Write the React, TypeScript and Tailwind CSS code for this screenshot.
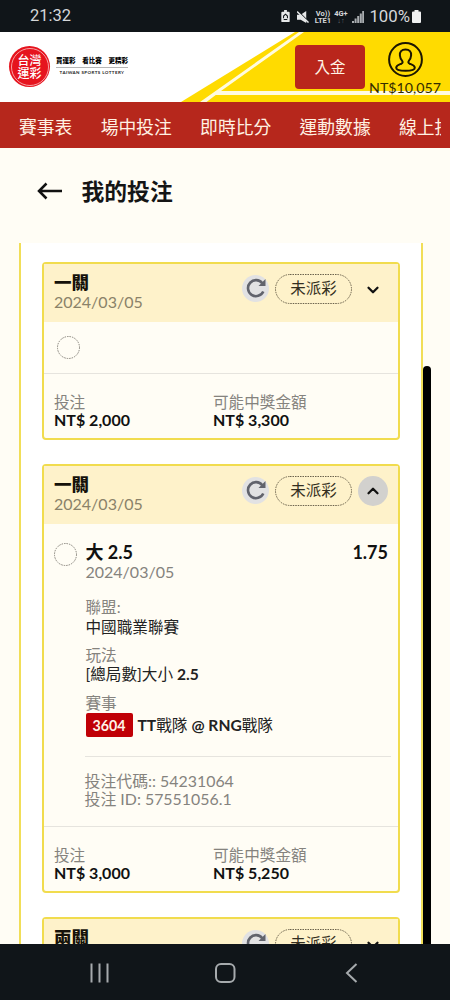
import { ChevronDown, ChevronUp } from "lucide-react";

const NAV_ITEMS = ["賽事表", "場中投注", "即時比分", "運動數據", "線上投注"];

interface Bet {
  title: string;
  stake: string;
  payout: string;
  open?: boolean;
}

const BETS: Bet[] = [
  { title: "一關", stake: "NT$ 2,000", payout: "NT$ 3,300" },
  { title: "一關", stake: "NT$ 3,000", payout: "NT$ 5,250", open: true },
  { title: "兩關", stake: "NT$ 1,000", payout: "NT$ 2,100" },
];

function StatusBar() {
  return (
    <div className="flex h-8 shrink-0 items-center bg-[#101519] pl-[30px] pr-[29px] pt-px font-['Roboto',sans-serif] text-[#d5d7d9]">
      <span className="text-[16.5px] leading-none">21:32</span>
      <svg className="ml-auto h-[13px] w-[9px]" viewBox="0 0 9 14">
        <path d="M3 0h3v2h2q1 0 1 1v9q0 1-1 1H1q-1 0-1-1V3q0-1 1-1h2z" fill="#e6e8e9" />
        <path d="M2.4 9V6.500l2.1-2 2.1 2V9M2.6 10.300h3.800" fill="none" stroke="#101519" strokeWidth="1.1" />
      </svg>
      <svg className="ml-[7px] h-[12px] w-[12px]" viewBox="0 0 13 13">
        <path d="M0 4h4l6-4v13L4 9.500H0z" fill="#e6e8e9" />
        <path d="M0 -1l13 13" stroke="#101519" strokeWidth="1.200" />
        <path d="M0 0.500l12.500 12" stroke="#e6e8e9" strokeWidth="1.600" />
      </svg>
      <div className="ml-[5px] w-[17px] text-center text-[7.5px] font-bold leading-[7px]">
        <div>Vo))</div>
        <div>LTE1</div>
      </div>
      <div className="ml-[2px] w-[15px] text-center text-[7.5px] font-bold leading-[7px]">
        <div>4G+</div>
        <div className="text-[#646a6e]">↓↑</div>
      </div>
      <svg className="ml-[4px] h-[12px] w-[12px]" viewBox="0 0 12 12">
        <path d="M0 12V10h2v2zM2.6 12V7.500h2V12zM5.200 12V5h2v7zM7.800 12V2.500h2V12z" fill="#a9adb0" />
        <path d="M10.200 12V0H12v12z" fill="#a9adb0" />
      </svg>
      <span className="ml-[5px] text-[16.800px] leading-none">100%</span>
      <svg className="ml-[2px] h-[13px] w-[9px]" viewBox="0 0 9 13">
        <path d="M2.500 0h4v1.500H8q1 0 1 1V12q0 1-1 1H1q-1 0-1-1V2.500q0-1 1-1h1.500z" fill="#f0f1f2" />
      </svg>
    </div>
  );
}

function Logo() {
  return (
    <div className="flex items-center">
      <div className="flex size-[41px] items-center justify-center rounded-full bg-[#e6141e]">
        <div className="flex size-[38px] items-center justify-center rounded-full border border-[#f8a0a3]">
          <div className="w-[24px] text-[12px] font-medium leading-[13px] text-white">台灣運彩</div>
        </div>
      </div>
      <div className="ml-[6px] w-[72px]">
        <div className="flex h-[9px] justify-between text-[6.500px] font-black leading-[8px] text-black">
          <span>買運彩</span>
          <span>看比賽</span>
          <span>更精彩</span>
        </div>
        <div className="mt-[1px] border-t border-[#b5b5b5] pt-[2px] text-center text-[4.500px] font-bold leading-[6px] tracking-[0.400px] text-[#222]">
          TAIWAN SPORTS LOTTERY
        </div>
      </div>
    </div>
  );
}

function Header() {
  return (
    <header className="relative flex h-[70px] shrink-0 items-start bg-white pl-[9px]">
      <svg className="absolute right-0 top-0 h-[70px] w-[270px]" viewBox="180 32 270 70">
        <path d="M181 102L295 32H450V102z" fill="#ffdb00" />
        <path d="M206.500 102L221 91L304 32h-5L217 90L200 102z" fill="#fffbe0" />
        <path d="M219 91H450v4H213z" fill="#fffbe0" />
      </svg>
      <div className="mt-[14px]">
        <Logo />
      </div>
      <button className="relative ml-auto mt-[13px] h-[44px] w-[70px] rounded bg-[#b9261c] pt-[2px] text-[15.500px] text-[#fff4e6]">
        入金
      </button>
      <div className="relative ml-[4px] mr-[9px] flex w-[72px] flex-col items-center pt-[10px]">
        <svg className="size-[35px]" viewBox="0 0 35 35" fill="none" stroke="#1c1600">
          <circle cx="17.500" cy="17.500" r="16.400" strokeWidth="2" />
          <path
            d="M17.500 7.500c-4 0-6 2.500-5.600 6 .2 2.500 1 4 2.300 5.400.8 1.300.5 2.200-.8 2.800-2.500 1-5.200 1.500-5.200 4 0 2 3.700 3 9.300 3s9.300-1 9.300-3c0-2.500-2.700-3-5.200-4-1.300-.6-1.600-1.500-.8-2.800 1.300-1.400 2.100-2.900 2.300-5.400.4-3.500-1.600-6-5.600-6z"
            strokeWidth="2"
          />
        </svg>
        <span className="whitespace-nowrap text-[14.200px] leading-[22px] text-[#352d00]">NT$10,057</span>
      </div>
    </header>
  );
}

function StatusPill() {
  return (
    <div className="relative flex h-[30px] w-[77px] items-center justify-center text-[15.500px] leading-none text-[#332e20]">
      <svg className="absolute inset-0 h-[30px] w-[77px]" viewBox="0 0 77 30" fill="none">
        <rect x="0.500" y="0.500" width="76" height="29" rx="14.500" stroke="#6b624c" strokeDasharray="1.500 1" />
      </svg>
      未派彩
    </div>
  );
}

function TicketCircle() {
  return (
    <svg className="size-[23px] shrink-0" viewBox="0 0 23 23" fill="none">
      <circle cx="11.500" cy="11.500" r="11" stroke="#85827a" strokeDasharray="1.500 1" />
    </svg>
  );
}

function RefreshButton() {
  return (
    <button className="flex size-[27px] items-center justify-center rounded-full bg-[#e2e2e3]">
      <svg className="size-[20px]" viewBox="0 0 20 20">
        <path d="M16.300 5.200A8 8 0 1 0 17.300 13.500" fill="none" stroke="#61636c" strokeWidth="2.600" />
        <path d="M19.500 1V8H12.500z" fill="#61636c" />
      </svg>
    </button>
  );
}

function BetDetail() {
  return (
    <div className="flex h-[302px] pl-[10px] pr-[7px] pt-[19px]">
      <TicketCircle />
      <div className="ml-[8.500px] flex-1 text-[15.600px] leading-[18px]">
        <div className="flex justify-between pr-[3px] text-[18px] font-bold leading-[18px] text-[#111]">
          <span>大 2.5</span>
          <span>1.75</span>
        </div>
        <div className="mt-[2px] text-[16px] text-[#85837e]">2024/03/05</div>
        <div className="mt-[17px] text-[#85837e]">聯盟:</div>
        <div className="mt-[2px] text-[#222]">中國職業聯賽</div>
        <div className="mt-[10px] text-[#85837e]">玩法</div>
        <div className="mt-[1px] text-[#222]">
          [總局數]大小 <b>2.5</b>
        </div>
        <div className="mt-[11px] text-[#85837e]">賽事</div>
        <div className="mt-[1px] flex h-[24px] items-center text-[#222]">
          <span className="mr-[5px] h-[24px] w-[47px] rounded-[2px] bg-[#c00006] text-center text-[14.200px] font-bold leading-[25px] text-[#fff3e8]">
            3604
          </span>
          <span>
            <b>TT</b>戰隊 <b>@ RNG</b>戰隊
          </span>
        </div>
        <div className="-ml-px mt-[19px] border-t border-[#e6e4de] pt-[15px] text-[15.900px] text-[#85837e]">
          <div className="leading-[17.500px]">投注代碼:: 54231064</div>
          <div className="leading-[17.500px]">投注 ID: 57551056.1</div>
        </div>
      </div>
    </div>
  );
}

function BetCard({ bet }: { bet: Bet }) {
  return (
    <section className="rounded border-2 border-[#f1dc4e] bg-[#fffdf5]">
      <div className="flex h-[58px] bg-[#fef2ca] pl-[10px] pr-[10px] pt-[10px]">
        <div className="flex-1">
          <div className="text-[17.500px] font-black leading-[18px] text-[#15120a]">{bet.title}</div>
          <div className="text-[16px] leading-[19px] text-[#8a8269]">2024/03/05</div>
        </div>
        <div className="flex h-[30px] items-center">
          <div className="-mt-[2px]">
            <RefreshButton />
          </div>
          <div className="ml-[6px]">
            <StatusPill />
          </div>
          <button
            className={`ml-[6px] flex size-[30px] items-center justify-center rounded-full ${bet.open ? "bg-[#d2d1ce]" : "pt-[2px]"}`}
          >
            {bet.open ? (
              <ChevronUp className="size-[18px] text-[#111]" strokeWidth={3} />
            ) : (
              <ChevronDown className="size-[18px] text-[#111]" strokeWidth={3} />
            )}
          </button>
        </div>
      </div>
      {bet.open ? (
        <BetDetail />
      ) : (
        <div className="flex h-[51px] items-center pl-[13px]">
          <TicketCircle />
        </div>
      )}
      <div className="grid h-[65px] grid-cols-[159px_1fr] border-t border-[#e6e4de] pl-[10px] pt-[19px] leading-[18px]">
        <div>
          <div className="text-[15.600px] text-[#85837e]">投注</div>
          <div className="text-[16px] font-bold text-[#111]">{bet.stake}</div>
        </div>
        <div>
          <div className="text-[15.600px] text-[#85837e]">可能中獎金額</div>
          <div className="text-[16px] font-bold text-[#111]">{bet.payout}</div>
        </div>
      </div>
    </section>
  );
}

export default function App() {
  return (
    <div className="flex h-[1000px] w-[450px] flex-col overflow-hidden bg-[#fffdf5] font-['Lato','Noto_Sans_CJK_TC',sans-serif]">
      <StatusBar />
      <Header />
      <nav className="h-[46px] shrink-0 bg-[#b6271c] pl-[19px] pr-[9px]">
        <div className="flex gap-[28.300px] overflow-hidden whitespace-nowrap text-[17.800px] leading-[50px] text-[#fff1e3]">
          {NAV_ITEMS.map(item => (
            <span key={item} className="shrink-0">{item}</span>
          ))}
        </div>
      </nav>
      <div className="flex h-[95px] shrink-0 items-center pb-[9px] pl-[37px]">
        <svg className="h-[18px] w-[26px]" viewBox="0 0 26 18" fill="none" stroke="#111" strokeWidth="2.500">
          <path d="M25 9H2M9.500 1.500L2 9l7.500 7.500" />
        </svg>
        <h1 className="ml-[18.500px] text-[22.800px] font-bold leading-none text-[#151515]">我的投注</h1>
      </div>
      <main className="relative min-h-0 flex-1 overflow-hidden pl-[19px] pr-[27px]">
        <div className="flex flex-col gap-[24px] border-x-2 border-[#f1de58] bg-white pl-[21px] pr-[21px] pt-[19px]">
          {BETS.map((bet, i) => (
            <BetCard key={i} bet={bet} />
          ))}
        </div>
        <div className="absolute bottom-0 left-[423px] top-[123px] w-[8px] rounded-t-full bg-black" />
      </main>
      <div className="flex h-14 shrink-0 items-center bg-[#101519]">
        <svg className="h-14 w-full" viewBox="0 0 450 56" fill="none" stroke="#a6aaad" strokeWidth="2">
          <path d="M91.500 19.500v19M99.500 19.500v19M107.500 19.500v19" />
          <rect x="216" y="20" width="18.500" height="18" rx="5" />
          <path d="M356.500 20L347 29l9.500 9" />
        </svg>
      </div>
    </div>
  );
}
